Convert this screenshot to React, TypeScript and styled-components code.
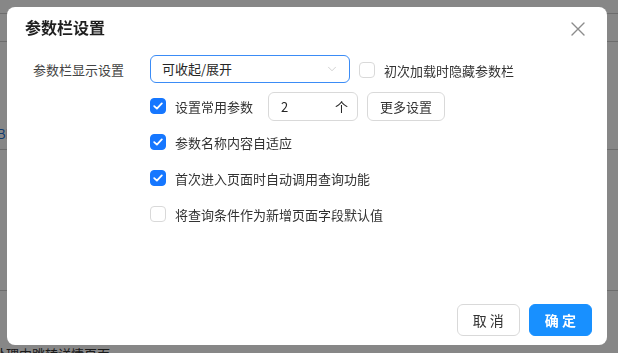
import React, { useState } from 'react';
import styled, { createGlobalStyle } from 'styled-components';
import { ChevronDown } from 'lucide-react';

const GlobalStyle = createGlobalStyle`
  html, body {
    margin: 0;
    padding: 0;
    background: #ffffff;
    font-family: "Noto Sans CJK SC", "Noto Sans", sans-serif;
  }
  * { box-sizing: border-box; }
`;

const App = () => {
  const [hideOnLoad, setHideOnLoad] = useState(false);
  const [useCommon, setUseCommon] = useState(true);
  const [autoFit, setAutoFit] = useState(true);
  const [autoQuery, setAutoQuery] = useState(true);
  const [asDefault, setAsDefault] = useState(false);

  return (
    <>
      <GlobalStyle />
      <Page>
        <PageBand $h={14} />
        <PageBand $h={28} />
        <PageEdge />
        <PageBand $h={78}>
          <BiText>BI</BiText>
        </PageBand>
        <PageBand $h={141} />
        <PageFoot>处理中跳转详情页面</PageFoot>
      </Page>
      <Mask />
      <Dialog>
        <Header>
          <Title>参数栏设置</Title>
          <CloseButton aria-label="close">
            <svg width="14" height="14" viewBox="0 0 14 14">
              <path
                d="M1 1 L13 13 M13 1 L1 13"
                stroke="currentColor"
                strokeWidth="1.4"
                strokeLinecap="round"
              />
            </svg>
          </CloseButton>
        </Header>
        <Body>
          <FieldLabel>参数栏显示设置</FieldLabel>
          <Rows>
            <Row>
              <Select>
                <span>可收起/展开</span>
                <ChevronDown size={14} strokeWidth={1.2} color="#bfbfbf" />
              </Select>
              <Check
                checked={hideOnLoad}
                onToggle={() => setHideOnLoad((v) => !v)}
                label="初次加载时隐藏参数栏"
              />
            </Row>
            <Row>
              <Check
                checked={useCommon}
                onToggle={() => setUseCommon((v) => !v)}
                label="设置常用参数"
              />
              <CountInput>
                <span>2</span>
                <span>个</span>
              </CountInput>
              <Button>更多设置</Button>
            </Row>
            <Row>
              <Check
                checked={autoFit}
                onToggle={() => setAutoFit((v) => !v)}
                label="参数名称内容自适应"
              />
            </Row>
            <Row>
              <Check
                checked={autoQuery}
                onToggle={() => setAutoQuery((v) => !v)}
                label="首次进入页面时自动调用查询功能"
              />
            </Row>
            <Row>
              <Check
                checked={asDefault}
                onToggle={() => setAsDefault((v) => !v)}
                label="将查询条件作为新增页面字段默认值"
              />
            </Row>
          </Rows>
        </Body>
        <Footer>
          <Button $wide>取 消</Button>
          <Button $wide $primary>确 定</Button>
        </Footer>
      </Dialog>
    </>
  );
};

type CheckProps = {
  checked: boolean;
  onToggle: () => void;
  label: string;
};

const Check = ({ checked, onToggle, label }: CheckProps) => (
  <CheckWrap onClick={onToggle}>
    <CheckBox $checked={checked}>
      {checked && (
        <svg width="10" height="8" viewBox="0 0 10 8">
          <path
            d="M1.2 4.1 L3.9 6.6 L8.8 1.4"
            fill="none"
            stroke="#fff"
            strokeWidth="1.8"
            strokeLinecap="round"
            strokeLinejoin="round"
          />
        </svg>
      )}
    </CheckBox>
    <span>{label}</span>
  </CheckWrap>
);

export default App;

const Page = styled.div`
  height: 353px;
  overflow: hidden;
  display: flex;
  flex-direction: column;
  font-size: 13px;
  color: #333;
`;

const PageBand = styled.div<{ $h: number }>`
  height: ${(p) => p.$h}px;
  flex-shrink: 0;
  border-bottom: 1px solid #cfcfcf;
  display: flex;
  align-items: flex-end;
`;

const PageEdge = styled.div`
  width: 8px;
  height: 26px;
  margin-top: 4px;
  flex-shrink: 0;
  border-right: 1px solid #cfcfcf;
`;

const BiText = styled.span`
  margin: 0 0 7px -3px;
  font-size: 13px;
  line-height: 16px;
  color: #1f6fd1;
`;

const PageFoot = styled.div`
  margin: 56px 0 0 -7px;
  font-size: 13px;
  line-height: 14px;
  color: #333;
  white-space: nowrap;
  flex-shrink: 0;
`;

const Mask = styled.div`
  position: fixed;
  inset: 0;
  background: rgba(0, 0, 0, 0.47);
`;

const Dialog = styled.div`
  position: fixed;
  left: 7px;
  top: 7px;
  width: 600px;
  height: 338px;
  background: #fff;
  border-radius: 8px;
  display: flex;
  flex-direction: column;
`;

const Header = styled.div`
  position: relative;
  height: 45px;
  padding: 11px 18px 0;
`;

const Title = styled.div`
  font-size: 16px;
  line-height: 18px;
  font-weight: 700;
  color: #1f1f1f;
`;

const CloseButton = styled.button`
  position: absolute;
  top: 15px;
  right: 22px;
  width: 14px;
  height: 14px;
  padding: 0;
  border: 0;
  background: none;
  color: #8c8c8c;
  display: flex;
  align-items: center;
  justify-content: center;
  cursor: pointer;
`;

const Body = styled.div`
  display: grid;
  grid-template-columns: 117px 1fr;
  padding-left: 26px;
`;

const FieldLabel = styled.div`
  height: 36px;
  line-height: 36px;
  font-size: 13px;
  color: #444;
`;

const Rows = styled.div`
  display: flex;
  flex-direction: column;
`;

const Row = styled.div`
  height: 36px;
  display: flex;
  align-items: center;
  gap: 9px;
  font-size: 13px;
  color: #333;
`;

const Select = styled.div`
  width: 200px;
  height: 28px;
  margin-top: -3px;
  padding: 0 10px 0 11px;
  border: 1px solid #3b8cf6;
  border-radius: 6px;
  display: flex;
  align-items: center;
  justify-content: space-between;
  color: #262626;
`;

const CheckWrap = styled.label`
  display: flex;
  align-items: center;
  gap: 9px;
  cursor: pointer;
  white-space: nowrap;
`;

const CheckBox = styled.span<{ $checked: boolean }>`
  width: 16px;
  height: 16px;
  border-radius: 4px;
  border: 1px solid ${(p) => (p.$checked ? '#1677ff' : '#d9d9d9')};
  background: ${(p) => (p.$checked ? '#1677ff' : '#fff')};
  display: flex;
  align-items: center;
  justify-content: center;
  flex-shrink: 0;
`;

const CountInput = styled.div`
  width: 90px;
  height: 29px;
  margin-left: 6px;
  padding: 0 9px 0 12px;
  border: 1px solid #d9d9d9;
  border-radius: 6px;
  display: flex;
  align-items: center;
  justify-content: space-between;
  color: #262626;
`;

const Button = styled.button<{ $primary?: boolean; $wide?: boolean }>`
  height: ${(p) => (p.$wide ? '32px' : '29px')};
  padding: 0 ${(p) => (p.$wide ? '15px' : '12px')};
  font-family: inherit;
  font-size: ${(p) => (p.$wide ? '14px' : '13px')};
  font-weight: ${(p) => (p.$primary ? 600 : 400)};
  border-radius: 6px;
  border: 1px solid ${(p) => (p.$primary ? '#1890ff' : '#d9d9d9')};
  background: ${(p) => (p.$primary ? '#1890ff' : '#fff')};
  color: ${(p) => (p.$primary ? '#fff' : '#333')};
  white-space: pre;
  cursor: pointer;
`;

const Footer = styled.div`
  margin-top: auto;
  display: flex;
  justify-content: flex-end;
  gap: 9px;
  padding: 0 15px 9px 0;
`;
